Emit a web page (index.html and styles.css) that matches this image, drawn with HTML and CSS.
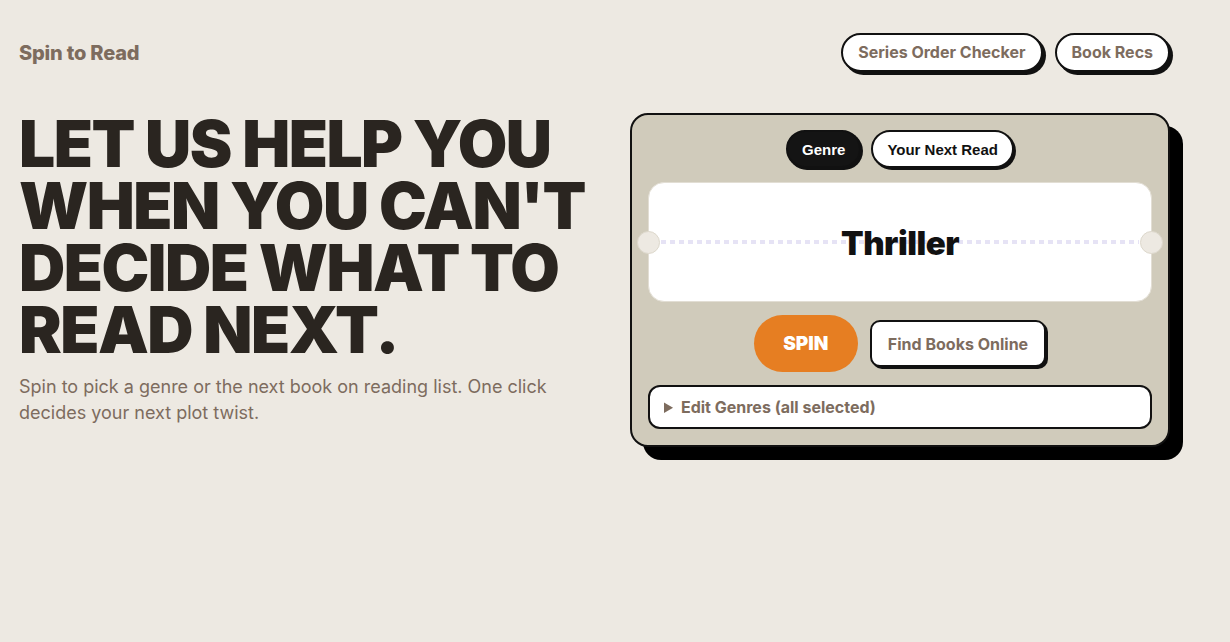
FILE: index.html
```html
<!DOCTYPE html>
<html>
<head>
    <meta charset="utf-8">
    <title>Spin to Read</title>
    <link rel="stylesheet" href="styles.css">
</head>
<body>
    <div class="page">
        <header class="topbar">
            <a class="logo" href="#">Spin to Read</a>
            <nav class="nav">
                <a class="nav-btn" href="#">Series Order Checker</a>
                <a class="nav-btn" href="#">Book Recs</a>
            </nav>
        </header>

        <main class="hero">
            <div class="hero-text">
                <h1 class="headline">LET US HELP YOU WHEN YOU CAN'T DECIDE WHAT TO READ NEXT.</h1>
                <p class="lead">Spin to pick a genre or the next book on reading list. One click decides your next plot twist.</p>
            </div>

            <div class="spinner-card">
                <div class="tabs">
                    <button class="tab active">Genre</button>
                    <button class="tab">Your Next Read</button>
                </div>

                <div class="reel">
                    <span class="reel-pin left"></span>
                    <span class="reel-line"></span>
                    <span class="reel-value">Thriller</span>
                    <span class="reel-pin right"></span>
                </div>

                <div class="actions">
                    <button class="spin-btn">SPIN</button>
                    <button class="find-btn">Find Books Online</button>
                </div>

                <details class="genres">
                    <summary>Edit Genres (all selected)</summary>
                </details>
            </div>
        </main>
    </div>
</body>
</html>
```

FILE: styles.css
```css
* {
    box-sizing: border-box;
}

body {
    margin: 0;
    background: #ede9e2;
    font-family: Inter, 'Noto Sans', sans-serif;
    color: #2a2520;
}

.page {
    padding: 0 60px 60px 19px;
}

.topbar {
    display: flex;
    align-items: center;
    justify-content: space-between;
    padding-top: 33px;
    height: 72px;
}

.logo {
    font-size: 20px;
    font-weight: 800;
    letter-spacing: -0.2px;
    color: #7d6c5e;
    text-decoration: none;
}

.nav {
    display: flex;
    gap: 12px;
}

.nav-btn {
    display: inline-block;
    height: 39px;
    line-height: 35px;
    padding: 0 15px;
    background: #fff;
    border: 2px solid #111;
    border-radius: 20px;
    box-shadow: 3px 3px 0 #111;
    font-size: 16px;
    font-weight: 700;
    color: #7d6c5e;
    text-decoration: none;
}

.hero {
    display: grid;
    grid-template-columns: 1fr 540px;
    gap: 20px;
    align-items: start;
    margin-top: 41px;
}

.headline {
    margin: 0;
    font-size: 64px;
    font-weight: 900;
    line-height: 62px;
    letter-spacing: -1.5px;
    color: #2a2520;
}

.lead {
    margin: 13px 0 0;
    font-size: 18px;
    line-height: 26px;
    color: #7d6c5e;
    max-width: 560px;
}

/* spinner widget */

.spinner-card {
    background: #d0cbbb;
    border: 2px solid #111;
    border-radius: 18px;
    box-shadow: 13px 13px 0 #000;
    padding: 15px 16px 16px;
}

.tabs {
    display: flex;
    justify-content: center;
    gap: 10px;
}

.tab {
    height: 38px;
    padding: 0 14px;
    border: 2px solid #111;
    border-radius: 20px;
    background: #fff;
    box-shadow: 2px 2px 0 #111;
    font-family: 'Liberation Sans', Arial, sans-serif;
    font-size: 15px;
    font-weight: 700;
    color: #111;
    cursor: pointer;
}

.tab.active {
    background: #141414;
    color: #fff;
}

.reel {
    position: relative;
    display: flex;
    align-items: center;
    justify-content: center;
    height: 120px;
    margin-top: 14px;
    background: #fff;
    border-radius: 16px;
    border: 1px solid #e2ded4;
}

/* dashed guide line across the reel */
.reel-line {
    position: absolute;
    left: 12px;
    right: 12px;
    top: 50%;
    height: 4px;
    margin-top: -2px;
    background: repeating-linear-gradient(90deg, #e6e3f5 0 5px, transparent 5px 9px);
}

.reel-value {
    position: relative;
    font-size: 33px;
    font-weight: 900;
    letter-spacing: -0.5px;
    color: #111;
    padding-top: 2px;
}

.reel-pin {
    position: absolute;
    top: 50%;
    width: 23px;
    height: 23px;
    margin-top: -11px;
    border-radius: 50%;
    background: #ede9e2;
    border: 1px solid #ddd8cc;
}

.reel-pin.left {
    left: -12px;
}

.reel-pin.right {
    right: -12px;
}

.actions {
    display: flex;
    justify-content: center;
    align-items: center;
    gap: 12px;
    margin-top: 13px;
}

.spin-btn {
    width: 104px;
    height: 57px;
    border: none;
    border-radius: 29px;
    background: #e67e22;
    color: #fff;
    font-family: inherit;
    font-size: 19px;
    font-weight: 900;
    cursor: pointer;
}

.find-btn {
    height: 47px;
    padding: 0 16px;
    background: #fff;
    border: 2px solid #111;
    border-radius: 10px;
    box-shadow: 2px 2px 0 #111;
    font-family: inherit;
    font-size: 16px;
    font-weight: 700;
    color: #7d6c5e;
    cursor: pointer;
}

.genres {
    margin-top: 13px;
    background: #fff;
    border: 2px solid #111;
    border-radius: 12px;
}

.genres summary {
    padding: 10px 14px;
    font-size: 16px;
    font-weight: 700;
    color: #7d6c5e;
    cursor: pointer;
}
```
